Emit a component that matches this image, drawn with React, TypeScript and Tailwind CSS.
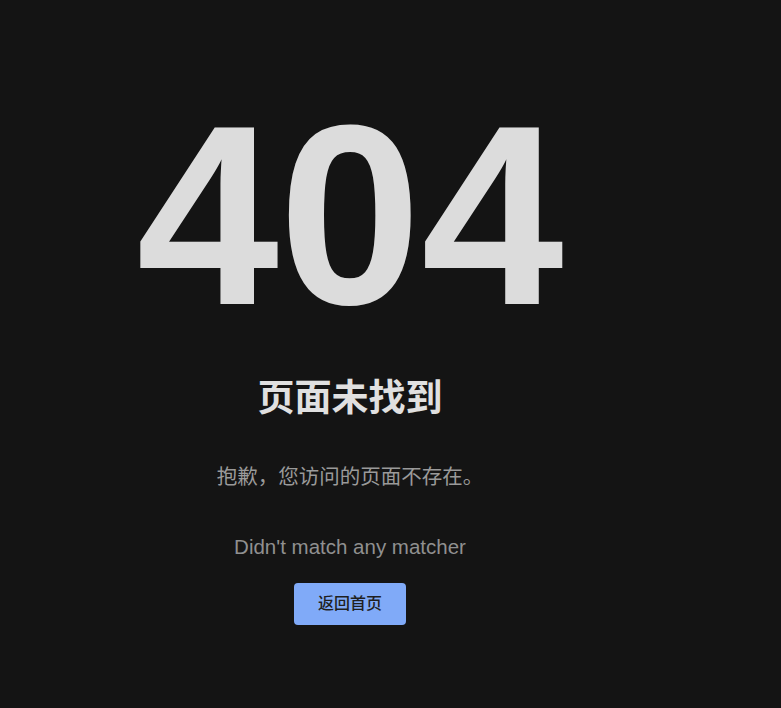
export default function App() {
  return (
    <main className="min-h-screen w-full bg-[#141414] font-['Liberation_Sans','Noto_Sans_CJK_SC',sans-serif]">
      <div className="flex w-[700px] flex-col items-center pt-[87px] text-center">
        <h1 className="text-[256px] font-bold leading-none text-[#dcdcdc]">404</h1>

        <h2 className="mt-[33px] text-[37px] font-bold leading-[45px] text-[#e0e0e0]">
          页面未找到
        </h2>

        <p className="mt-[42px] text-[20.5px] leading-[28px] text-[#9a9a9a]">
          抱歉，您访问的页面不存在。
        </p>

        <p className="mt-[42px] text-[20.5px] leading-[28px] text-[#909090]">
          Didn't match any matcher
        </p>

        <button
          className="mt-[22px] rounded bg-[#80aaf8] px-6 py-[9px] text-[16px] font-medium leading-[24px] text-[#1f1f1f]"
          onClick={() => (window.location.href = "/")}
        >
          返回首页
        </button>
      </div>
    </main>
  );
}
